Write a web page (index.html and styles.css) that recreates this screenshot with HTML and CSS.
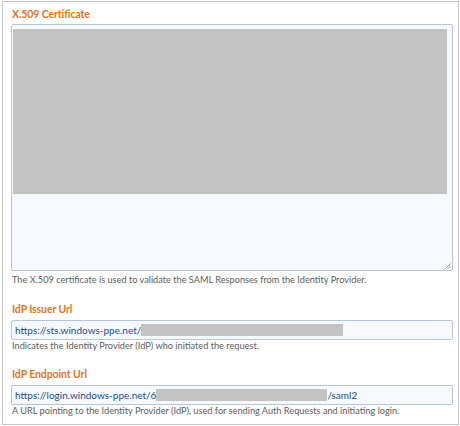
FILE: index.html
```html
<!DOCTYPE html>
<html>
<head>
<meta charset="utf-8">
<link rel="stylesheet" href="styles.css">
</head>
<body>
<div class="frame">
  <div class="field">
    <div class="label">X.509 Certificate</div>
    <div class="textarea">
      <div class="redact-block"></div>
      <svg class="grip" width="7" height="7" viewBox="0 0 7 7"><path d="M6.5 1.5 L1.5 6.5 M6.5 4 L4 6.5" stroke="#8a8a8a" stroke-width="0.9" fill="none"/></svg>
    </div>
    <div class="help">The X.509 certificate is used to validate the SAML Responses from the Identity Provider.</div>
  </div>
  <div class="field">
    <div class="label">IdP Issuer Url</div>
    <div class="input"><span>https://sts.windows-ppe.net/</span><span class="redact r1"></span></div>
    <div class="help">Indicates the Identity Provider (IdP) who initiated the request.</div>
  </div>
  <div class="field">
    <div class="label">IdP Endpoint Url</div>
    <div class="input"><span>https://login.windows-ppe.net/6</span><span class="redact r2"></span><span>/saml2</span></div>
    <div class="help">A URL pointing to the Identity Provider (IdP), used for sending Auth Requests and initiating login.</div>
  </div>
</div>
</body>
</html>
```
FILE: styles.css
```css
html, body { margin: 0; padding: 0; background: #fff; }
body { font-family: Lato, "Open Sans", sans-serif; }
.frame {
  box-sizing: border-box;
  margin: 1px 0 0 2px;
  width: 457px;
  height: 424px;
  border: 1px solid #c4c4c4;
  padding: 5px 5px 0 8px;
  display: flex;
  flex-direction: column;
}
.field { display: flex; flex-direction: column; }
.label {
  color: #e5731f;
  font-weight: bold;
  font-size: 10.5px;
  letter-spacing: -0.1px;
  line-height: 14px;
  padding-left: 1px;
  margin-bottom: 4px;
}
.field:nth-child(1) .label { margin-bottom: 3px; }
.textarea {
  position: relative;
  box-sizing: border-box;
  width: 442px;
  height: 247px;
  border: 1px solid #b7c7d9;
  border-radius: 2px;
  background: #f6faff;
  padding: 4px 4px 0 1px;
}
.redact-block { width: 434px; height: 165px; background: #c3c3c3; }
.grip { position: absolute; right: 1px; bottom: 1px; }
.help {
  color: #5e5e5e;
  font-size: 9.2px;
  line-height: 12px;
  padding: 0 0 0 1px;
  white-space: nowrap;
}
.field:nth-child(1) .help { padding-top: 3px; margin-bottom: 16px; }
.field:nth-child(2) .help { margin-bottom: 15px; }
.input {
  box-sizing: border-box;
  width: 442px;
  height: 20px;
  border: 1px solid #b7c7d9;
  border-radius: 2px;
  background: #f6faff;
  padding: 0 0 0 3px;
  display: flex;
  align-items: center;
  color: #1f4b8f;
  font-size: 10px;
  white-space: nowrap;
}
.redact { display: inline-block; height: 12px; background: #c3c3c3; }
.r1 { width: 202px; }
.r2 { width: 171px; }
```
